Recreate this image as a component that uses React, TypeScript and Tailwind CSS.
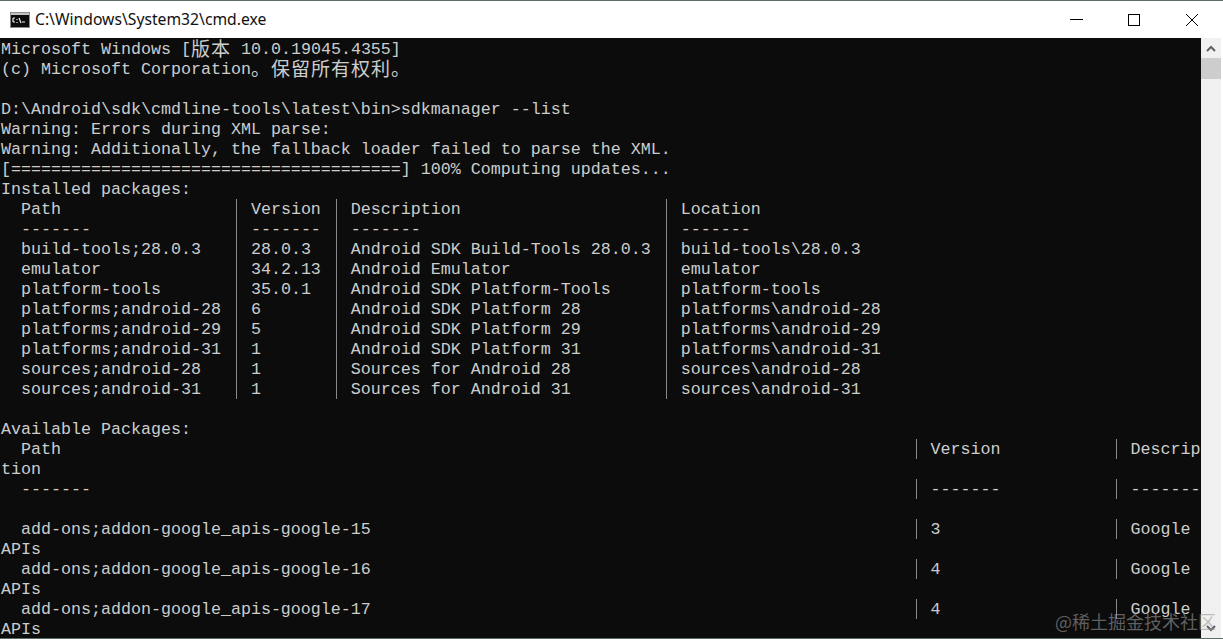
const upperRows = [
  "  Path                 | Version | Description                    | Location",
  "  -------              | ------- | -------                        | -------",
  "  build-tools;28.0.3   | 28.0.3  | Android SDK Build-Tools 28.0.3 | build-tools\\28.0.3",
  "  emulator             | 34.2.13 | Android Emulator               | emulator",
  "  platform-tools       | 35.0.1  | Android SDK Platform-Tools     | platform-tools",
  "  platforms;android-28 | 6       | Android SDK Platform 28        | platforms\\android-28",
  "  platforms;android-29 | 5       | Android SDK Platform 29        | platforms\\android-29",
  "  platforms;android-31 | 1       | Android SDK Platform 31        | platforms\\android-31",
  "  sources;android-28   | 1       | Sources for Android 28         | sources\\android-28",
  "  sources;android-31   | 1       | Sources for Android 31         | sources\\android-31",
];

const gap = (n: number) => " ".repeat(n);

const lines = [
  "Microsoft Windows [版本 10.0.19045.4355]",
  "(c) Microsoft Corporation。保留所有权利。",
  "",
  "D:\\Android\\sdk\\cmdline-tools\\latest\\bin>sdkmanager --list",
  "Warning: Errors during XML parse:",
  "Warning: Additionally, the fallback loader failed to parse the XML.",
  "[" + "=".repeat(39) + "] 100% Computing updates...",
  "Installed packages:",
  ...upperRows,
  "",
  "Available Packages:",
  "  Path" + gap(85) + "| Version" + gap(11) + "| Descrip",
  "tion",
  "  -------" + gap(82) + "| -------" + gap(11) + "| --------",
  "",
  "  add-ons;addon-google_apis-google-15" + gap(54) + "| 3" + gap(17) + "| Google",
  "APIs",
  "  add-ons;addon-google_apis-google-16" + gap(54) + "| 4" + gap(17) + "| Google",
  "APIs",
  "  add-ons;addon-google_apis-google-17" + gap(54) + "| 4" + gap(17) + "| Google",
  "APIs",
];

function TermLine({ text }: { text: string }) {
  const parts = text.split(/(\||[\u3000-\u9fff]+)/).filter(Boolean);
  return (
    <div className="h-5 leading-5 whitespace-pre">
      {parts.map((part, i) => {
        if (part === "|") {
          return (
            <span key={i} className="inline-block w-[10px] h-5 align-top">
              <span className="block w-px h-5 ml-[5px] -mt-px bg-[#8a8a8a]" />
            </span>
          );
        }
        if (/[\u3000-\u9fff]/.test(part)) {
          return (
            <span key={i} className="text-[19px] leading-[0] tracking-[1px] align-[-2px] font-['Noto_Sans_CJK_SC',sans-serif]">
              {part}
            </span>
          );
        }
        return <span key={i}>{part}</span>;
      })}
    </div>
  );
}

function CmdIcon() {
  return (
    <svg width="20" height="16" viewBox="0 0 20 16">
      <rect x="0.5" y="0.5" width="19" height="15" fill="#0c0c0c" stroke="#8c8c8c" />
      <rect x="1" y="1" width="18" height="2" fill="#c4c4c4" />
      <path d="M3 6h2M3 6v4M3 10h2M7 7v1M7 10v1M9 6l2 5M12 10h3" stroke="#f0f0f0" strokeWidth="1.2" fill="none" />
    </svg>
  );
}

export default function App() {
  return (
    <div className="w-[1223px] h-[639px] overflow-hidden relative bg-white flex flex-col border-t border-b border-[#5d6b66]">
      <header className="h-[37px] shrink-0 flex items-center pl-[10px] bg-white">
        <CmdIcon />
        <span className="ml-[5px] text-[15.7px] text-[#111] font-['Noto_Sans',sans-serif]">C:\Windows\System32\cmd.exe</span>
        <div className="ml-auto flex items-center h-full text-black">
          <button className="w-[58px] h-full flex items-center justify-center">
            <span className="block w-[13px] h-px bg-black" />
          </button>
          <button className="w-[58px] h-full flex items-center justify-center">
            <span className="block w-[12px] h-[12px] border border-black" />
          </button>
          <button className="w-[58px] h-full flex items-center justify-center mr-[2px]">
            <svg width="14" height="14" viewBox="0 0 14 14">
              <path d="M1 1l12 12M13 1L1 13" stroke="#000" strokeWidth="1" />
            </svg>
          </button>
        </div>
      </header>
      <div className="flex-1 flex min-h-0">
        <main className="w-[1201px] bg-[#0c0c0c] pl-px pt-[2px] overflow-hidden text-[#cccccc] text-[16.67px] font-['Liberation_Mono',monospace]">
          {lines.map((line, i) => (
            <TermLine key={i} text={line} />
          ))}
        </main>
        <aside className="w-5 bg-[#f0f0f0] flex flex-col">
          <div className="h-5 shrink-0 flex items-center justify-center">
            <svg width="10" height="7" viewBox="0 0 10 7">
              <path d="M1 6l4-4 4 4" stroke="#606060" strokeWidth="2" fill="none" />
            </svg>
          </div>
          <div className="h-[21px] shrink-0 bg-[#cdcdcd]" />
          <div className="mt-auto h-5 shrink-0 flex items-center justify-center">
            <svg width="10" height="7" viewBox="0 0 10 7">
              <path d="M1 1l4 4 4-4" stroke="#606060" strokeWidth="2" fill="none" />
            </svg>
          </div>
        </aside>
        <div className="w-[2px] bg-white" />
      </div>
      <div className="absolute right-[7px] bottom-[5px] text-[18px] leading-6 text-[#9a9a9a]/60 font-['Noto_Sans_CJK_SC',sans-serif]">
        @稀土掘金技术社区
      </div>
    </div>
  );
}
